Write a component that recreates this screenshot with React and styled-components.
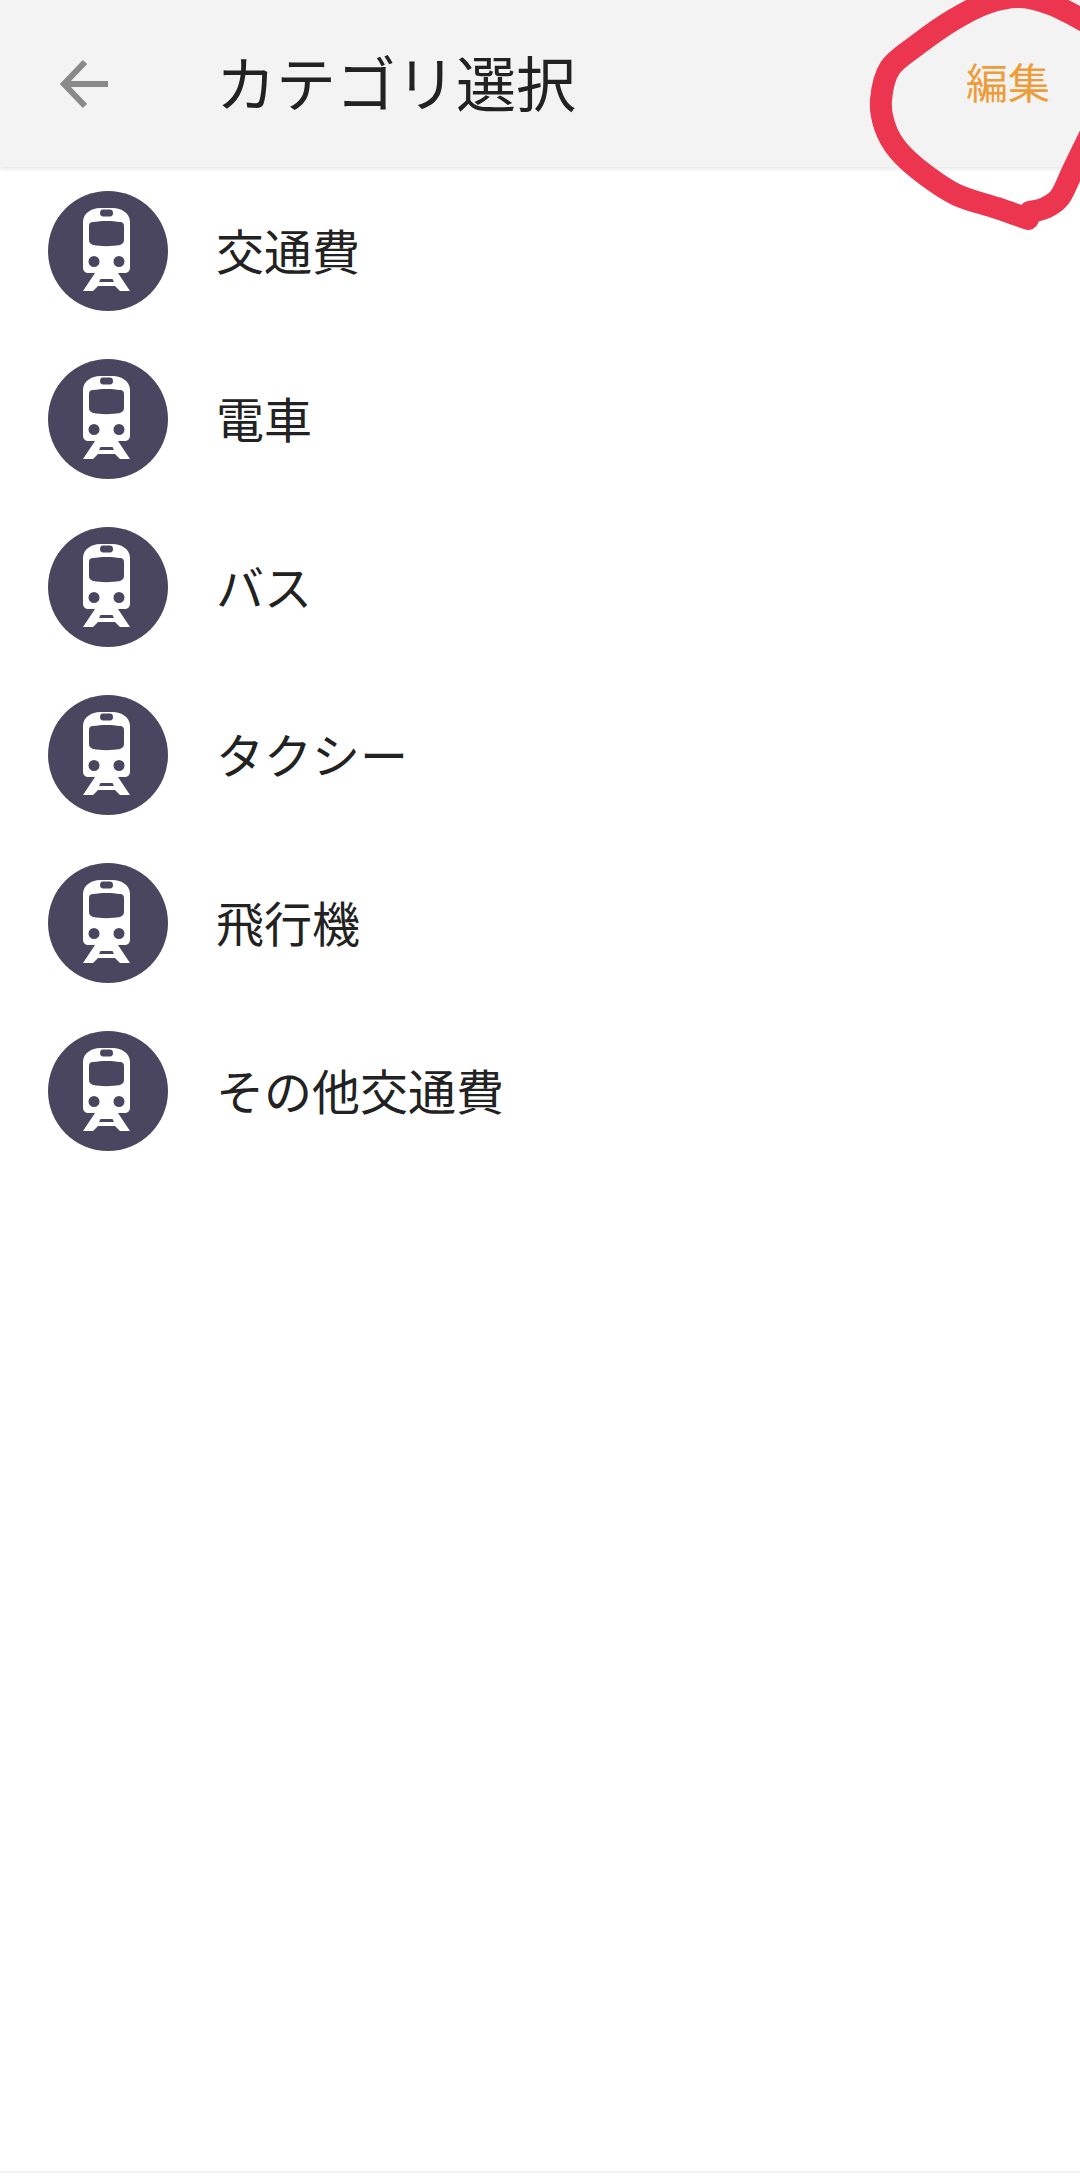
import React from "react";
import styled, { createGlobalStyle } from "styled-components";

const categories = ["交通費", "電車", "バス", "タクシー", "飛行機", "その他交通費"];

// hand drawn circle round the edit button, split where the pen turns
const scribbleLeft = [
  [1090, 24], [1053, 5], [1020, -3], [987, 3], [953, 20], [917, 45], [890, 68],
  [881, 100], [885, 127], [898, 150], [923, 173], [957, 195], [997, 208], [1028, 219],
];
const scribbleRight = [
  [1030, 212], [1045, 208], [1060, 197], [1073, 170], [1090, 135],
];

// catmull-rom through the points, as cubic segments
function smoothPath(points) {
  let d = `M${points[0][0]} ${points[0][1]}`;
  for (let i = 0; i < points.length - 1; i++) {
    const p0 = points[Math.max(i - 1, 0)];
    const p1 = points[i];
    const p2 = points[i + 1];
    const p3 = points[Math.min(i + 2, points.length - 1)];
    const c1 = [p1[0] + (p2[0] - p0[0]) / 6, p1[1] + (p2[1] - p0[1]) / 6];
    const c2 = [p2[0] - (p3[0] - p1[0]) / 6, p2[1] - (p3[1] - p1[1]) / 6];
    d += `C${c1[0]} ${c1[1]} ${c2[0]} ${c2[1]} ${p2[0]} ${p2[1]}`;
  }
  return d;
}

const GlobalStyle = createGlobalStyle`
  html, body {
    margin: 0;
    padding: 0;
    background: #fff;
  }
`;

const Page = styled.div`
  position: relative;
  display: flex;
  flex-direction: column;
  width: 1080px;
  height: 2173px;
  overflow: hidden;
  background: #fff;
  font-family: "Noto Sans CJK JP", "Noto Sans", sans-serif;
  color: #222;
`;

const Header = styled.header`
  position: relative;
  z-index: 1;
  flex: none;
  display: flex;
  align-items: center;
  height: 167px;
  padding: 0 30px 0 60px;
  box-sizing: border-box;
  background: #f3f3f3;
  box-shadow: 0 1px 5px rgba(0, 0, 0, 0.14);
`;

const BackIcon = styled.svg`
  flex: none;
  width: 50px;
  height: 50px;
`;

const Title = styled.h1`
  flex: 1;
  margin: 0 0 6px 106px;
  font-size: 60px;
  font-weight: 400;
  line-height: 1;
`;

const EditButton = styled.span`
  margin-bottom: 5px;
  font-size: 42px;
  line-height: 1;
  color: #ee9c3a;
`;

const List = styled.ul`
  flex: 1;
  margin: 0;
  padding: 0;
  list-style: none;
`;

const Row = styled.li`
  display: flex;
  align-items: center;
  height: 168px;
  padding-left: 48px;
`;

const Badge = styled.div`
  flex: none;
  width: 120px;
  height: 120px;
  border-radius: 50%;
  background: #4b465f;
`;

const Label = styled.span`
  margin: 0 0 5px 48px;
  font-size: 48px;
  line-height: 1;
`;

const BottomEdge = styled.div`
  flex: none;
  height: 2px;
  background: #f3f3f3;
`;

const Scribble = styled.svg`
  position: absolute;
  top: 0;
  left: 0;
  z-index: 2;
  width: 1080px;
  height: 240px;
  pointer-events: none;
`;

function TrainIcon() {
  return (
    <svg width="120" height="120" viewBox="0 0 120 120">
      <path
        fill="#fff"
        fillRule="evenodd"
        d="M35 31C35 22 44 17 52 17H65C73 17 82 22 82 31V76C82 80 80 82 76 82H41C37 82 35 80 35 76ZM55 18.500C53 18.500 52 20 52 22S53 25.500 55 25.500H62C64 25.500 65 24 65 22S64 18.500 62 18.500ZM45 31C42 31 41 33 41 35V49C41 52 43 53 45 54C53 55.500 64 55.500 72 54C74 53 76 52 76 49V35C76 33 75 31 72 31C64 29.500 53 29.500 45 31ZM46 65A5.500 5.500 0 1 0 46 76A5.500 5.500 0 1 0 46 65ZM71 65A5.500 5.500 0 1 0 71 76A5.500 5.500 0 1 0 71 65Z"
      />
      <path
        fill="#fff"
        fillRule="evenodd"
        d="M47 82H70L82 100H72L67 95H50L45 100H35ZM52.500 88L51 91H66L64.500 88Z"
      />
    </svg>
  );
}

export default function App() {
  return (
    <Page>
      <GlobalStyle />
      <Header>
        <BackIcon viewBox="0 0 50 50">
          <path
            d="M48 25H5M25 3L4 25L25 47"
            fill="none"
            stroke="#8a8a8a"
            strokeWidth="6"
          />
        </BackIcon>
        <Title>カテゴリ選択</Title>
        <EditButton>編集</EditButton>
      </Header>
      <List>
        {categories.map((name) => (
          <Row key={name}>
            <Badge>
              <TrainIcon />
            </Badge>
            <Label>{name}</Label>
          </Row>
        ))}
      </List>
      <BottomEdge />
      <Scribble viewBox="0 0 1080 240">
        <path
          d={`${smoothPath(scribbleLeft)}${smoothPath(scribbleRight)}`}
          fill="none"
          stroke="#ec354e"
          strokeWidth="22"
          strokeLinecap="round"
          strokeLinejoin="round"
        />
      </Scribble>
    </Page>
  );
}
